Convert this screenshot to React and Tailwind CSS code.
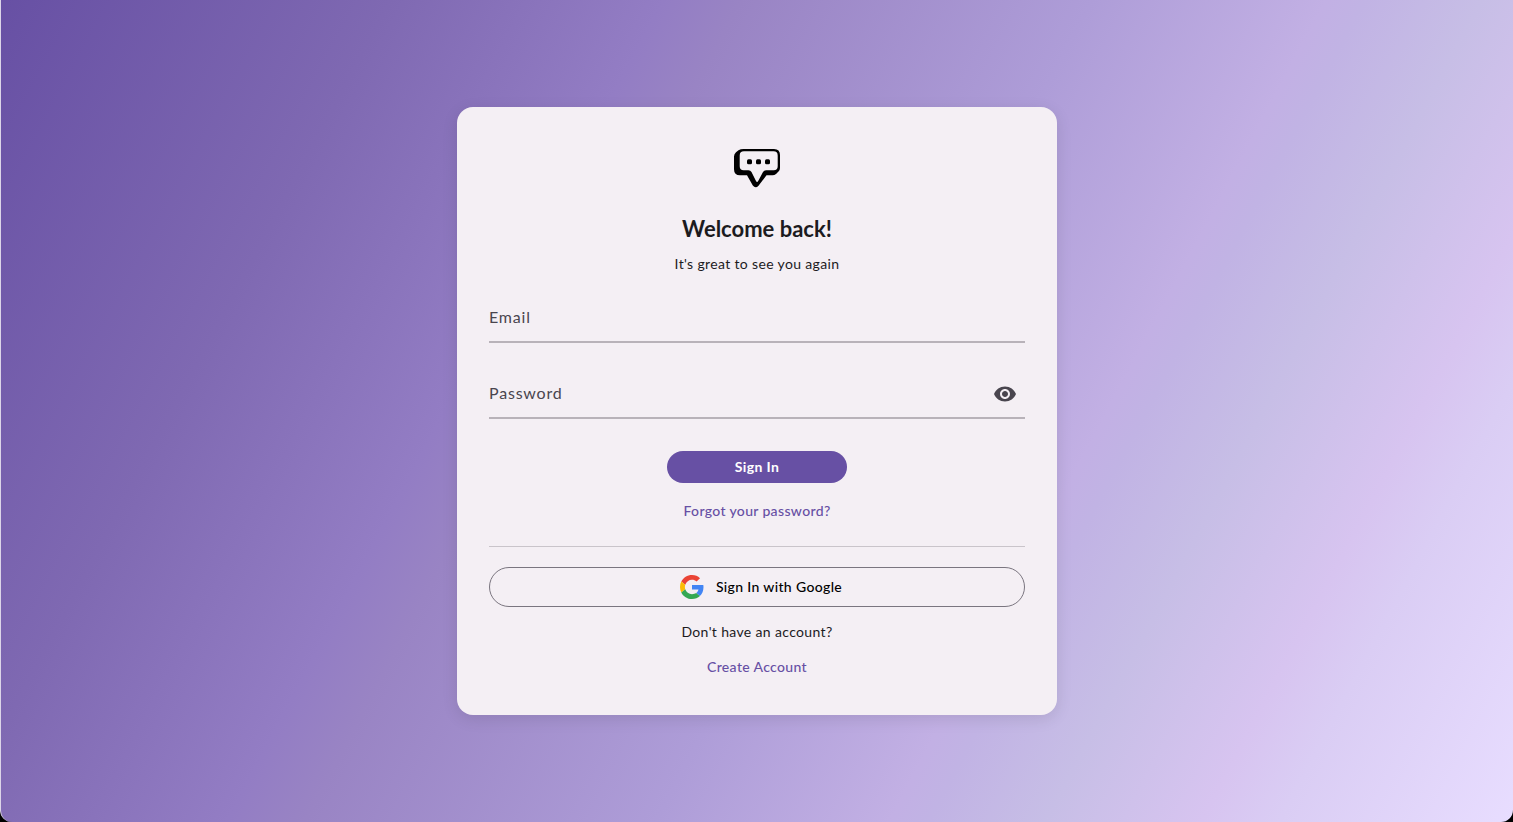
import { useState } from "react";

function ChatLogo() {
  return (
    <svg width="46" height="42" viewBox="0 -1 46 42" aria-hidden="true">
      <path
        d="M9.500 1H40Q46 1 46 7V20Q46 22 44.500 23.500L42 26Q40.500 27.300 38.500 27.300H32.500L24.500 37.700Q21.500 41 18.800 37.500L13 27.300H6Q0 27.300 0 21.300V8.500Q0 6 2 4.200L4.500 2.300Q6.500 1 9.500 1Z"
        fill="#000"
      />
      <path
        d="M10 3.300H39.500Q43.700 3.300 43.700 7.500V18.300Q43.700 22.300 39.700 22.300H32Q30 22.300 29 24L24.200 33Q23 34.800 22 33L17.500 24Q16.500 22.300 14.500 22.300H9.700Q5.700 22.300 5.700 18.300V7.500Q5.700 3.300 10 3.300Z"
        fill="#f4eff4"
      />
      <g fill="#000">
        <rect x="13" y="11.300" width="5" height="5" rx="1.500" />
        <rect x="22" y="11.300" width="5" height="5" rx="1.500" />
        <rect x="31" y="11.300" width="5" height="5" rx="1.500" />
      </g>
    </svg>
  );
}

function GoogleLogo() {
  return (
    <svg width="24" height="24" viewBox="0 0 48 48" aria-hidden="true">
      <path fill="#EA4335" d="M24 9.5c3.54 0 6.71 1.22 9.21 3.6l6.85-6.85C35.900 2.380 30.470 0 24 0 14.620 0 6.510 5.380 2.560 13.220l7.980 6.190C12.430 13.720 17.740 9.500 24 9.500z" />
      <path fill="#4285F4" d="M46.980 24.550c0-1.570-.15-3.090-.38-4.550H24v9.020h12.940c-.58 2.960-2.260 5.480-4.780 7.180l7.730 6c4.510-4.180 7.090-10.360 7.090-17.650z" />
      <path fill="#FBBC05" d="M10.530 28.590c-.48-1.450-.76-2.990-.76-4.590s.27-3.140.76-4.590l-7.980-6.190C.92 16.460 0 20.120 0 24c0 3.880.92 7.540 2.560 10.780l7.970-6.190z" />
      <path fill="#34A853" d="M24 48c6.480 0 11.930-2.130 15.890-5.810l-7.730-6c-2.150 1.450-4.920 2.300-8.160 2.300-6.260 0-11.570-4.220-13.470-9.910l-7.980 6.190C6.510 42.620 14.620 48 24 48z" />
    </svg>
  );
}

function EyeIcon() {
  return (
    <svg width="24" height="24" viewBox="0 0 24 24" fill="currentColor" aria-hidden="true">
      <path d="M12 4.500C7 4.500 2.730 7.610 1 12c1.730 4.390 6 7.500 11 7.500s9.270-3.110 11-7.500c-1.730-4.390-6-7.500-11-7.500zM12 17c-2.760 0-5-2.240-5-5s2.240-5 5-5 5 2.240 5 5-2.240 5-5 5zm0-8c-1.660 0-3 1.340-3 3s1.340 3 3 3 3-1.340 3-3-1.340-3-3-3z" />
    </svg>
  );
}

const rowClass = "flex h-14 w-full items-center border-b-2 border-[#b8b2b9] pt-2";
const fieldClass =
  "h-full min-w-0 flex-1 bg-transparent pb-1 text-base tracking-wider text-[#49454e] outline-none placeholder:text-[#49454e] placeholder:opacity-100";

export default function App() {
  const [visible, setVisible] = useState(false);
  return (
    <div className="min-h-screen bg-black font-['Lato',sans-serif]">
      <main className="flex min-h-screen items-center justify-center rounded-b-xl border-l border-[#dcd5e8] bg-[linear-gradient(118deg,#6750a4_0%,#7f69b2_20%,#937dc4_34%,#9984c4_38%,#ae9dd8_56%,#c2b0e4_68%,#c1b3e4_70%,#c7bee6_76%,#d7c4f0_84%,#dacdf4_88%,#e8ddff_100%)] py-8">
        <section className="flex w-full max-w-[600px] flex-col items-center rounded-2xl bg-[#f4eff4] px-8 pt-10 pb-[38px] shadow-[0_4px_16px_rgba(0,0,0,0.1)]">
          <ChatLogo />
          <h1 className="mt-6 text-[22px] leading-8 font-bold text-[#1c1b1e]">Welcome back!</h1>
          <p className="mt-[9px] text-sm tracking-wide text-[#1c1b1e]">It's great to see you again</p>

          <form className="mt-[13px] flex w-full flex-col items-center" onSubmit={(e) => e.preventDefault()}>
            <div className={rowClass}>
              <input type="email" aria-label="Email" placeholder="Email" className={fieldClass} />
            </div>
            <div className={`mt-5 ${rowClass}`}>
              <input type={visible ? "text" : "password"} aria-label="Password" placeholder="Password" className={fieldClass} />
              <button type="button" aria-label="Show password" onClick={() => setVisible(!visible)} className="mr-2 text-[#49454e]">
                <EyeIcon />
              </button>
            </div>
            <button type="submit" className="mt-8 h-8 w-[180px] rounded-full bg-[#6750a4] text-sm font-bold tracking-wide text-white">
              Sign In
            </button>
          </form>
          <a href="#forgot" className="mt-[18px] text-sm font-medium tracking-wide text-[#6750a4]">Forgot your password?</a>

          <hr className="mt-[25px] w-full border-[#c9c4ca]" />
          <button type="button" className="mt-5 flex h-10 w-full items-center justify-center gap-3 rounded-full border border-[#7a757f] pl-2 text-sm font-medium tracking-wide text-black">
            <GoogleLogo />
            Sign In with Google
          </button>
          <p className="mt-[15px] text-sm tracking-wide text-[#1c1b1e]">Don't have an account?</p>
          <a href="#create" className="mt-[15px] text-sm font-medium tracking-wide text-[#6750a4]">Create Account</a>
        </section>
      </main>
    </div>
  );
}
